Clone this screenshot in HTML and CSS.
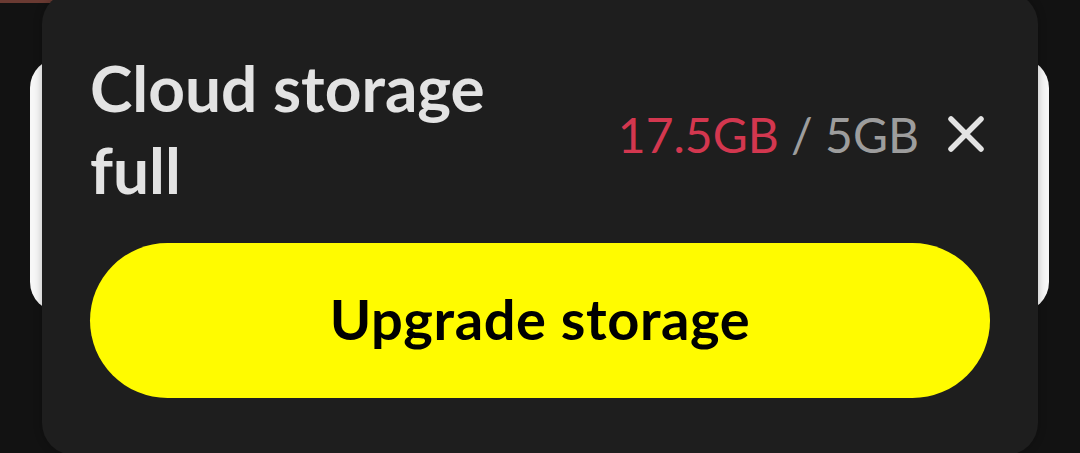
FILE: index.html
```html
<!DOCTYPE html>
<html>
<head>
<meta charset="utf-8">
<link rel="stylesheet" href="styles.css">
</head>
<body>
<div class="screen">
  <div class="strip"></div>
  <div class="back-card"></div>
  <div class="sheet">
    <div class="header">
      <h1 class="title">Cloud storage<br>full</h1>
      <div class="usage">
        <span class="used">17.5GB</span><span class="sep"> / </span><span class="total">5GB</span>
        <button class="close" aria-label="Close">
          <svg width="38" height="38" viewBox="0 0 38 38"><path d="M4 4 L34 34 M34 4 L4 34" stroke="#e3e3e3" stroke-width="5.5" stroke-linecap="round" fill="none"/></svg>
        </button>
      </div>
    </div>
    <button class="upgrade">Upgrade storage</button>
  </div>
</div>
</body>
</html>
```

FILE: styles.css
```css
* { box-sizing: border-box; }
html, body { margin: 0; padding: 0; }
body {
  background: #121212;
  width: 1080px;
  height: 453px;
  overflow: hidden;
  font-family: "Lato", "Noto Sans", sans-serif;
}
.screen {
  position: relative;
  width: 1080px;
  height: 453px;
  overflow: hidden;
}
.strip {
  position: absolute;
  left: 0;
  top: 0;
  width: 62px;
  height: 3px;
  background: #6a3a32;
}
.back-card {
  position: absolute;
  left: 30px;
  top: 58px;
  width: 1019px;
  height: 254px;
  background: #f7f7f7;
  border-radius: 30px;
}
.sheet {
  position: absolute;
  left: 42px;
  top: -8px;
  width: 996px;
  height: 463px;
  background: #1e1e1e;
  border-radius: 32px;
  padding: 55px 48px 0 48px;
  display: flex;
  flex-direction: column;
  gap: 32px;
  box-shadow: 0 0 8px rgba(0,0,0,0.25);
}
.header {
  display: flex;
  align-items: center;
  justify-content: space-between;
}
.title {
  margin: 0;
  font-size: 64px;
  line-height: 82px;
  font-weight: 700;
  color: #e3e3e3;
}
.usage {
  display: flex;
  align-items: center;
  font-size: 48px;
  font-weight: 400;
  color: #9d9d9d;
  margin-top: 10px;
  margin-right: 2px;
}
.used { color: #d3374f; }
.sep { white-space: pre; color: #9d9d9d; }
.total { color: #9d9d9d; }
.close {
  margin-left: 28px;
  margin-right: 3px;
  padding: 0;
  border: 0;
  background: transparent;
  display: flex;
}
.upgrade {
  height: 155px;
  width: 100%;
  border: 0;
  border-radius: 78px;
  background: #fffb00;
  color: #000;
  font-family: "Lato", "Noto Sans", sans-serif;
  font-size: 56px;
  font-weight: 700;
  letter-spacing: 0.6px;
  padding: 0 0 4px 0;
}
```
